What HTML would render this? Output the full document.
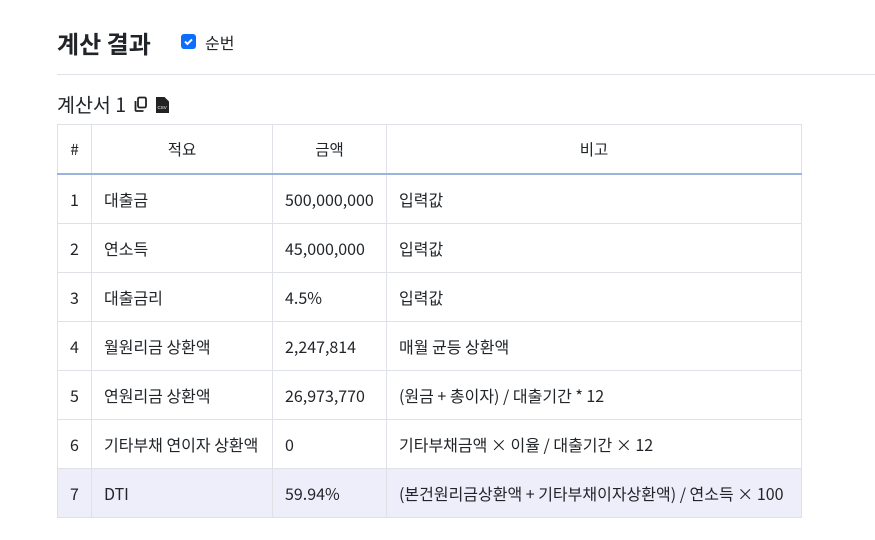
<!DOCTYPE html>
<html><head><meta charset="utf-8"><style>
body{margin:0;width:875px;height:540px;background:#fff;font-family:"Noto Sans CJK KR","Liberation Sans",sans-serif;color:#212529;position:relative;overflow:hidden}
.t{position:absolute;left:57px;top:26px;font-size:24px;font-weight:700;line-height:34px}
.cb{position:absolute;left:181px;top:34px;width:15px;height:15px;background:#0d6efd;border-radius:3px}
.cb svg{display:block}
.cbl{position:absolute;left:205px;top:30px;font-size:16px;line-height:24px}
.hr{position:absolute;left:57px;right:0;top:74px;height:1px;background:#dee2e6}
.st{position:absolute;left:57px;top:90px;font-size:19.5px;line-height:28px}
.ic{position:absolute;top:96px}
table{position:absolute;left:57px;top:124px;border-collapse:collapse;font-size:16px;width:745px;table-layout:fixed}
td,th{border:1px solid #dee2e6;height:48px;padding:0 12px;text-align:left;font-weight:400;vertical-align:middle;white-space:nowrap}
th{text-align:center;border-bottom:2px solid #9ab4e0;height:48px;font-size:15.5px}
tr.h td{background:#eeeefb}
</style></head><body>
<div class="t">계산 결과</div>
<div class="cb"><svg width="15" height="15" viewBox="0 0 15 15"><path d="M4 7.6l2.4 2.4 4.6-4.6" stroke="#fff" stroke-width="2" fill="none"/></svg></div>
<div class="cbl">순번</div>
<div class="hr"></div>
<div class="st">계산서 1</div>
<svg class="ic" style="left:133px" width="15" height="17" viewBox="0 0 15 17"><rect x="5" y="1.5" width="8" height="10" rx="1.5" fill="none" stroke="#222" stroke-width="1.8"/><path d="M2.5 5v9a1 1 0 0 0 1 1h7" fill="none" stroke="#222" stroke-width="1.8"/></svg>
<svg class="ic" style="left:156px" width="13" height="17" viewBox="0 0 13 17"><path d="M0 1h8.5l4.5 4.5V17H0z" fill="#222"/><text x="1.5" y="13" font-size="4.5" fill="#fff" font-family="Liberation Sans">CSV</text></svg>
<table>
<colgroup><col style="width:34px"><col style="width:181px"><col style="width:114px"><col></colgroup>
<tr><th>#</th><th>적요</th><th>금액</th><th>비고</th></tr>
<tr><td>1</td><td>대출금</td><td>500,000,000</td><td>입력값</td></tr>
<tr><td>2</td><td>연소득</td><td>45,000,000</td><td>입력값</td></tr>
<tr><td>3</td><td>대출금리</td><td>4.5%</td><td>입력값</td></tr>
<tr><td>4</td><td>월원리금 상환액</td><td>2,247,814</td><td>매월 균등 상환액</td></tr>
<tr><td>5</td><td>연원리금 상환액</td><td>26,973,770</td><td>(원금 + 총이자) / 대출기간 * 12</td></tr>
<tr><td>6</td><td>기타부채 연이자 상환액</td><td>0</td><td>기타부채금액 × 이율 / 대출기간 × 12</td></tr>
<tr class="h"><td>7</td><td>DTI</td><td>59.94%</td><td>(본건원리금상환액 + 기타부채이자상환액) / 연소득 × 100</td></tr>
</table>
</body></html>
